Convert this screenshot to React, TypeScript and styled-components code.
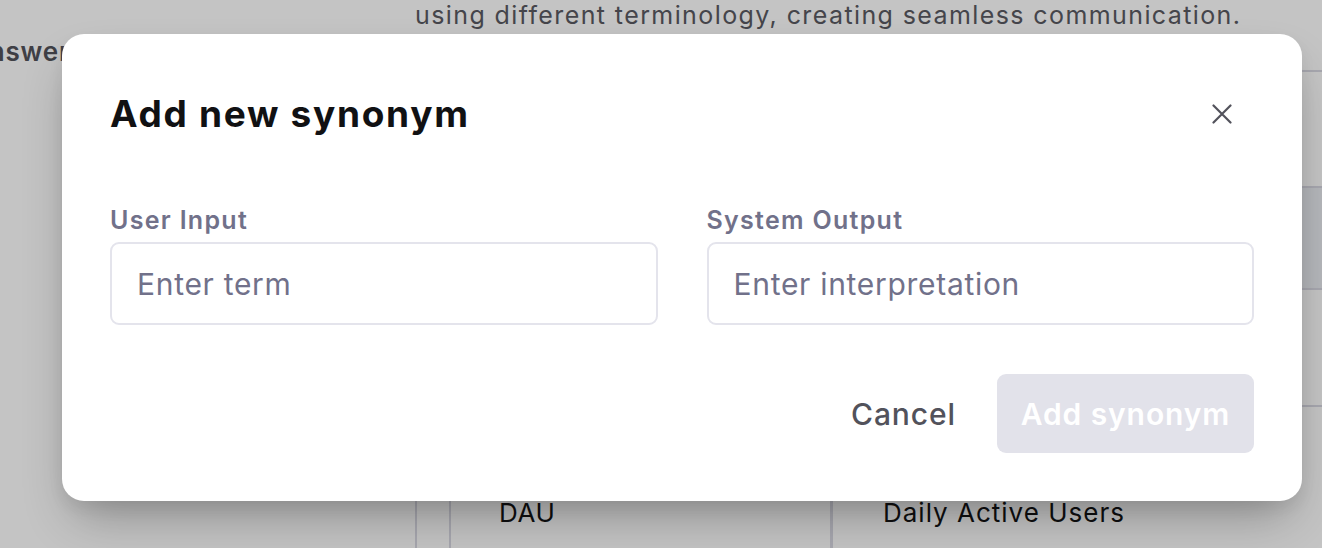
import React from "react";
import styled, { createGlobalStyle } from "styled-components";

const GlobalStyle = createGlobalStyle`
  html, body {
    margin: 0;
    padding: 0;
    height: 100%;
    overflow: hidden;
    background: #ffffff;
    font-family: Inter, "Noto Sans", "Liberation Sans", sans-serif;
  }
  * {
    box-sizing: border-box;
  }
`;

type Row = { term: string; meaning: string; highlighted?: boolean; height: number };

const rows: Row[] = [
  { term: "", meaning: "", height: 116 },
  { term: "", meaning: "", height: 102, highlighted: true },
  { term: "", meaning: "", height: 117 },
  { term: "DAU", meaning: "Daily Active Users", height: 160 },
];

const App = () => {
  return (
    <>
      <GlobalStyle />
      <Page>
        <Sidebar>
          <SidebarTitle>Answer</SidebarTitle>
        </Sidebar>
        <Main>
          <Description>
            using different terminology, creating seamless communication.
          </Description>
          <Section>
            <Table>
              {rows.map((row, i) => (
                <TableRow key={i} $height={row.height} $highlighted={row.highlighted}>
                  <TermCell>{row.term}</TermCell>
                  <MeaningCell>{row.meaning}</MeaningCell>
                </TableRow>
              ))}
            </Table>
          </Section>
        </Main>

        <Overlay>
          <Dialog>
            <Header>
              <Title>Add new synonym</Title>
              <CloseButton aria-label="Close">
                <svg width="20" height="20" viewBox="0 0 20 20" fill="none">
                  <path
                    d="M1.5 1.5L18.5 18.5M18.5 1.5L1.5 18.5"
                    stroke="#52525b"
                    strokeWidth="2.2"
                    strokeLinecap="round"
                  />
                </svg>
              </CloseButton>
            </Header>
            <Fields>
              <Field>
                <Label>User Input</Label>
                <Input placeholder="Enter term" />
              </Field>
              <Field>
                <Label>System Output</Label>
                <Input placeholder="Enter interpretation" />
              </Field>
            </Fields>
            <Actions>
              <GhostButton>Cancel</GhostButton>
              <PrimaryButton disabled>Add synonym</PrimaryButton>
            </Actions>
          </Dialog>
        </Overlay>
      </Page>
    </>
  );
};

const Page = styled.div`
  position: relative;
  width: 100vw;
  height: 548px;
  overflow: hidden;
  display: flex;
  background: #ffffff;
`;

const Sidebar = styled.aside`
  width: 415px;
  flex-shrink: 0;
  padding-top: 36px;
  overflow: hidden;
`;

const SidebarTitle = styled.div`
  margin-left: -31px;
  font-size: 26px;
  font-weight: 600;
  line-height: 32px;
  letter-spacing: 0.8px;
  color: #52525a;
`;

const Main = styled.main`
  flex: 1;
  display: flex;
  flex-direction: column;
  min-width: 0;
`;

const Description = styled.p`
  margin: 0;
  font-size: 25px;
  line-height: 30px;
  letter-spacing: 1.4px;
  color: #5a5a62;
  white-space: nowrap;
`;

const Section = styled.div`
  margin-top: 40px;
  flex: 1;
  border-left: 2px solid #dadae4;
  padding-left: 32px;
`;

const Table = styled.div`
  border-left: 2px solid #dadae4;
  display: flex;
  flex-direction: column;
`;

const TableRow = styled.div<{ $height: number; $highlighted?: boolean }>`
  display: grid;
  grid-template-columns: 382px 1fr;
  height: ${(p) => p.$height}px;
  flex-shrink: 0;
  border-top: 2px solid #dadae4;
  background: ${(p) => (p.$highlighted ? "#eceef4" : "transparent")};
`;

const TermCell = styled.div`
  border-right: 3px solid #dadae4;
  padding: 89px 0 0 48px;
  font-size: 26px;
  line-height: 34px;
  letter-spacing: 0.6px;
  color: #141416;
`;

const MeaningCell = styled.div`
  padding: 89px 0 0 50px;
  font-size: 26px;
  line-height: 34px;
  letter-spacing: 1px;
  color: #141416;
`;

const Overlay = styled.div`
  position: absolute;
  inset: 0;
  background: rgba(0, 0, 0, 0.23);
  padding: 34px 20px 0 62px;
`;

const Dialog = styled.div`
  width: 1240px;
  height: 467px;
  background: #ffffff;
  border-radius: 22px;
  padding: 48px;
  display: flex;
  flex-direction: column;
  box-shadow: 0 25px 50px -12px rgba(0, 0, 0, 0.3), 0 8px 16px rgba(0, 0, 0, 0.06);
`;

const Header = styled.div`
  display: flex;
  align-items: center;
  justify-content: space-between;
  height: 64px;
`;

const Title = styled.h2`
  margin: 0;
  font-size: 37px;
  font-weight: 700;
  line-height: 44px;
  color: #111113;
  letter-spacing: 1.7px;
`;

const CloseButton = styled.button`
  width: 64px;
  height: 64px;
  display: flex;
  align-items: center;
  justify-content: center;
  border: none;
  background: transparent;
  padding: 0;
  cursor: pointer;
`;

const Fields = styled.div`
  display: grid;
  grid-template-columns: 1fr 1fr;
  gap: 49px;
  margin-top: 56px;
`;

const Field = styled.label`
  display: flex;
  flex-direction: column;
  gap: 4px;
`;

const Label = styled.span`
  font-size: 25px;
  font-weight: 600;
  line-height: 36px;
  letter-spacing: 1.3px;
  color: #71718a;
`;

const Input = styled.input`
  height: 83px;
  border: 2px solid #e4e4ec;
  border-radius: 9px;
  padding: 0 25px;
  font-family: inherit;
  font-size: 30px;
  letter-spacing: 0.7px;
  color: #18181b;
  background: #ffffff;
  outline: none;

  &::placeholder {
    color: #71718a;
  }
`;

const Actions = styled.div`
  margin-top: auto;
  display: flex;
  justify-content: flex-end;
  align-items: center;
  gap: 17px;
`;

const BaseButton = styled.button`
  height: 79px;
  border: none;
  border-radius: 9px;
  font-family: inherit;
  font-size: 30px;
  font-weight: 600;
  letter-spacing: 0.9px;
  white-space: nowrap;
  padding: 0 24px;
  cursor: pointer;
`;

const GhostButton = styled(BaseButton)`
  background: transparent;
  color: #52525b;
  font-weight: 500;
`;

const PrimaryButton = styled(BaseButton)`
  width: 257px;
  padding: 0;
  background: #e2e2ea;
  color: #ffffff;
  cursor: default;
`;

export default App;
